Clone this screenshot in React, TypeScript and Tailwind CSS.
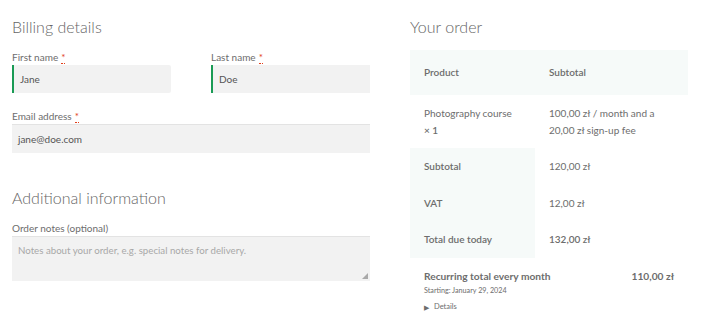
import React from 'react'

const font = { fontFamily: 'Lato, "Liberation Sans", sans-serif' }

function Label({ text, required }: { text: string; required?: boolean }) {
  return (
    <label className="block text-[10px] leading-[13px] text-[#6d6d6d] mb-[1px]">
      {text}
      {required && (
        <abbr className="ml-[3px] text-[#e2401c] no-underline border-b border-dotted border-[#e2401c]" title="required">
          *
        </abbr>
      )}
    </label>
  )
}

export default function App() {
  return (
    <div className="w-[712px] h-[332px] bg-white flex text-[#6d6d6d]" style={font}>
      {/* Billing column */}
      <div className="w-[358px] ml-[12px] pt-[16px]">
        <h3 className="text-[16px] leading-[22px] font-light text-[#666] mb-[13px]">Billing details</h3>

        <div className="flex gap-[40px]">
          <div className="w-[159px]">
            <Label text="First name" required />
            <div className="h-[28px] bg-[#f2f2f2] border-l-2 border-[#1a9b55] rounded-r-[2px] px-[6px] flex items-center text-[10px] text-[#555]">
              Jane
            </div>
          </div>
          <div className="w-[159px]">
            <Label text="Last name" required />
            <div className="h-[28px] bg-[#f2f2f2] border-l-2 border-[#1a9b55] px-[6px] flex items-center text-[10px] text-[#555]">
              Doe
            </div>
          </div>
        </div>

        <div className="mt-[17px]">
          <Label text="Email address" required />
          <div className="h-[29px] bg-[#f2f2f2] border-t border-[#e3e3e3] px-[6px] flex items-center text-[10px] text-[#555]">
            jane@doe.com
          </div>
        </div>

        <h3 className="text-[16px] leading-[22px] font-light text-[#666] mt-[34px] mb-[13px]">Additional information</h3>
        <Label text="Order notes (optional)" />
        <div className="relative h-[45px] bg-[#f2f2f2] border-t border-[#e3e3e3] px-[6px] pt-[7px] text-[9.7px] leading-[12px] text-[#a8a8a8]">
          Notes about your order, e.g. special notes for delivery.
          <svg className="absolute right-[2px] bottom-[2px]" width="6" height="6" viewBox="0 0 6 6">
            <polygon points="6,0 6,6 0,6" fill="#a9a9a9" />
          </svg>
        </div>
      </div>

      {/* Order column */}
      <div className="w-[278px] ml-[40px] pt-[16px]">
        <h3 className="text-[16px] leading-[22px] font-light text-[#666] mb-[12px]">Your order</h3>
        <table className="w-full border-collapse text-[10px]">
          <thead>
            <tr className="bg-[#f6faf9] h-[45px]">
              <th className="w-[125px] text-left pl-[14px] font-semibold text-[#6d6d6d]">Product</th>
              <th className="text-left pl-[14px] font-semibold text-[#6d6d6d]">Subtotal</th>
            </tr>
          </thead>
          <tbody>
            <tr className="h-[53px]">
              <td className="pl-[14px] leading-[17px] align-middle">
                Photography course
                <br />
                <span className="font-semibold">× 1</span>
              </td>
              <td className="pl-[14px] leading-[17px] align-middle">
                100,00 zł / month and a
                <br />
                20,00 zł sign-up fee
              </td>
            </tr>
          </tbody>
          <tfoot>
            <tr className="h-[37px]">
              <th className="bg-[#f6faf9] text-left pl-[14px] font-semibold">Subtotal</th>
              <td className="pl-[14px]">120,00 zł</td>
            </tr>
            <tr className="h-[36px]">
              <th className="bg-[#f6faf9] text-left pl-[14px] font-semibold">VAT</th>
              <td className="pl-[14px]">12,00 zł</td>
            </tr>
            <tr className="h-[37px]">
              <th className="bg-[#f6faf9] text-left pl-[14px] font-semibold">Total due today</th>
              <td className="pl-[14px] font-semibold">132,00 zł</td>
            </tr>
          </tfoot>
        </table>

        <div className="pl-[14px] pr-[14px] pt-[11px]">
          <div className="flex justify-between text-[10.2px] leading-[14px] font-bold">
            <span>Recurring total every month</span>
            <span>110,00 zł</span>
          </div>
          <div className="text-[7.2px] leading-[12px] mt-[2px]">Starting: January 29, 2024</div>
          <div className="text-[7.5px] leading-[12px] mt-[4px] flex items-center gap-[5px]">
            <span className="text-[7px]">▶</span>
            <span>Details</span>
          </div>
        </div>
      </div>
    </div>
  )
}
